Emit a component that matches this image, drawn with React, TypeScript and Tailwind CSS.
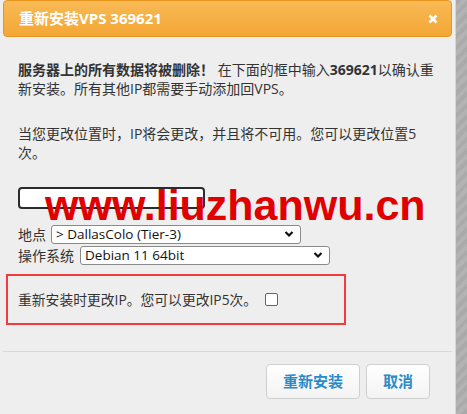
const Chevron = () => (
    <svg
        width="10"
        height="7"
        viewBox="0 0 10 7"
        className="pointer-events-none absolute right-[7px] top-1/2 -translate-y-1/2"
    >
        <path d="M1.5 1.5 L5 5 L8.5 1.5" fill="none" stroke="#111" strokeWidth="2.2" />
    </svg>
)

const Select = ({ value, width }: { value: string; width: string }) => {
    return (
        <div className={`relative ${width}`}>
            <select
                defaultValue={value}
                className="h-[19px] w-full appearance-none rounded-[3px] border border-[#8a8a8a] bg-white pl-[4px] text-[13.5px] leading-[17px] text-[#111] outline-none"
            >
                <option>{value}</option>
            </select>
            <Chevron />
        </div>
    )
}

const App = () => {
    return (
        <div className="relative flex h-[414px] w-[467px] overflow-hidden font-['Open_Sans','Noto_Sans_CJK_SC',sans-serif] text-[#333]">
            <div className="w-[456px] shrink-0 border-r border-[#d6d6d6] bg-[#eeeeee]">
                <div className="mx-[3px] flex h-[37px] items-center justify-between rounded-[4px] border border-[#e8961c] bg-[linear-gradient(#f8b955,#f4a735)] pl-[15px] pr-[13px]">
                    <h1 className="text-[15px] font-bold text-white">重新安装VPS 369621</h1>
                    <svg width="10" height="10" viewBox="0 0 10 10">
                        <path d="M1.5 1.5 L8.5 8.5 M8.5 1.5 L1.5 8.5" stroke="#fff" strokeWidth="2.6" />
                    </svg>
                </div>

                <div className="px-[18px] pt-[23px] text-[14px] leading-[19px]">
                    <p>
                        <b>服务器上的所有数据将被删除！</b> 在下面的框中输入<b>369621</b>以确认重新安装。所有其他IP都需要手动添加回VPS。
                    </p>
                    <p className="mt-[26px]">
                        当您更改位置时，IP将会更改，并且将不可用。您可以更改位置5次。
                    </p>

                    <input
                        type="text"
                        className="mt-[25px] block h-[22px] w-[187px] rounded-[4px] border-2 border-[#2b2b2b] bg-white outline-none"
                    />

                    <div className="mt-[15px] flex flex-col gap-[1px]">
                        <div className="flex items-center gap-[5px]">
                            <label>地点</label>
                            <Select value="> DallasColo (Tier-3)" width="w-[250px]" />
                        </div>
                        <div className="flex items-center gap-[6px]">
                            <label>操作系统</label>
                            <Select value="Debian 11 64bit" width="w-[250px]" />
                        </div>
                    </div>

                    <div className="-ml-[12px] mt-[9px] flex h-[51px] w-[340px] items-center border-2 border-[#f03c3c] pl-[10px]">
                        <span className="text-[13.8px]">重新安装时更改IP。您可以更改IP5次。</span>
                        <input
                            type="checkbox"
                            className="ml-[8px] h-[13px] w-[13px] appearance-none rounded-[2px] border border-[#666] bg-white"
                        />
                    </div>
                </div>

                <div className="mx-[3px] mt-[26px] h-px bg-[#d8d8d8]"></div>

                <div className="mt-[12px] flex justify-end gap-[6px] pr-[25px]">
                    <button className="h-[35px] rounded-[4px] border border-[#cfcfcf] bg-[linear-gradient(#ffffff,#f3f3f3)] px-4 text-[15px] font-bold text-[#2a8bc8]">
                        重新安装
                    </button>
                    <button className="h-[35px] rounded-[4px] border border-[#cfcfcf] bg-[linear-gradient(#ffffff,#f3f3f3)] px-4 text-[15px] font-bold text-[#2a8bc8]">
                        取消
                    </button>
                </div>
            </div>

            <div className="flex-1 bg-[repeating-linear-gradient(135deg,#aaaaaa_0px,#aaaaaa_4px,#b3b3b3_4px,#b3b3b3_8px)]"></div>

            <div className="pointer-events-none absolute left-[45px] top-[184px] font-['Liberation_Sans',Arial,sans-serif] text-[43px] font-bold leading-none text-[#e00000]">
                www.liuzhanwu.cn
            </div>
        </div>
    )
}

export default App
